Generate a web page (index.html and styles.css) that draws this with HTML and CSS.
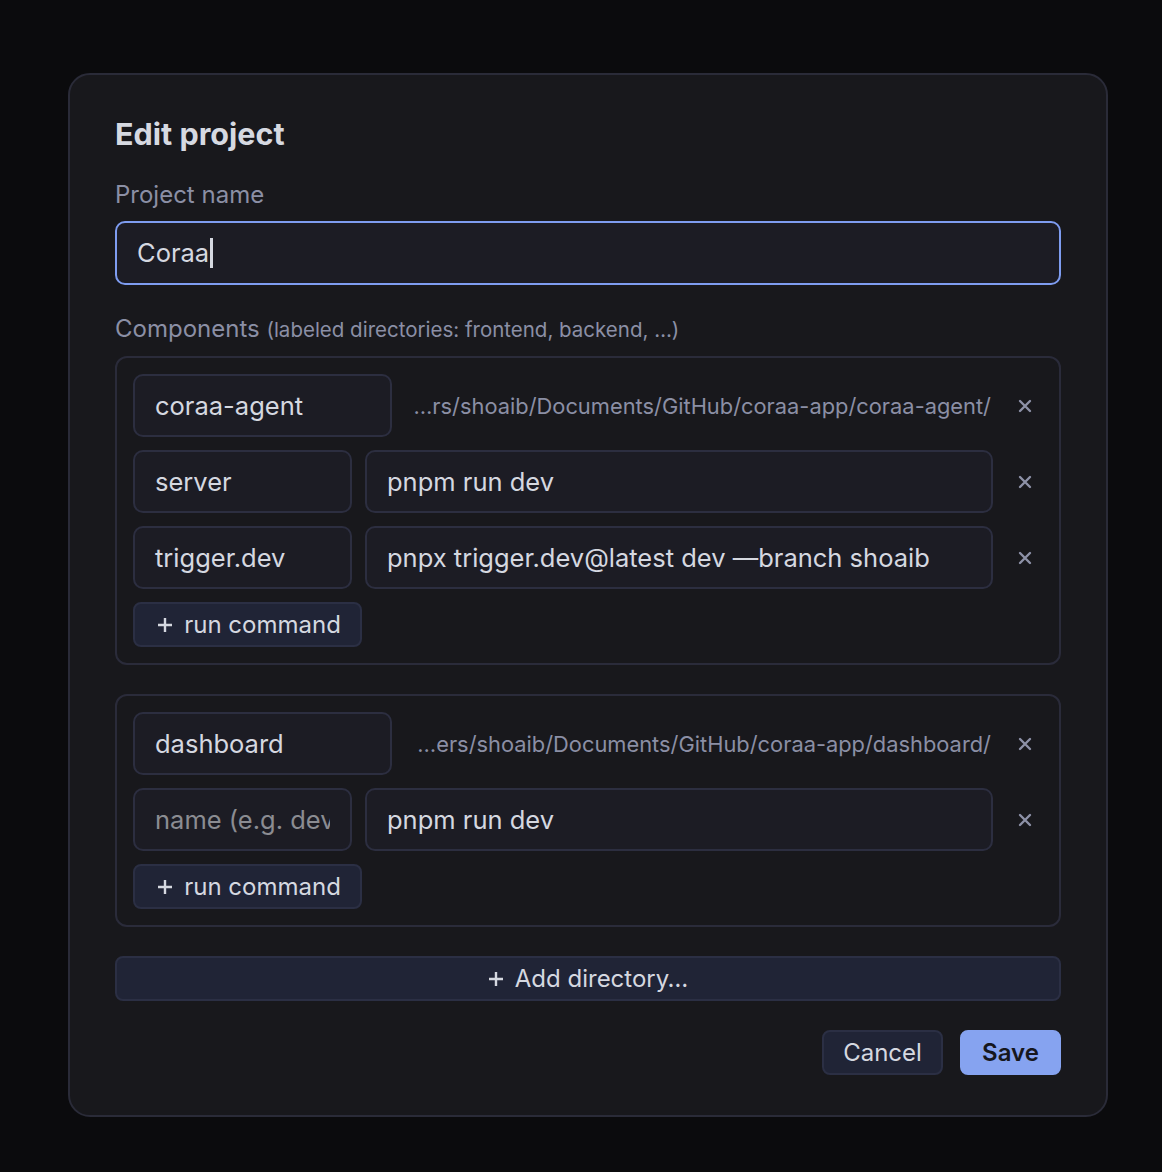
FILE: index.html
```html
<!DOCTYPE html>
<html lang="en">
<head>
    <meta charset="UTF-8">
    <title>Edit project</title>
    <link rel="stylesheet" href="styles.css">
</head>
<body>
    <div class="dialog">
        <h1 class="title">Edit project</h1>

        <label class="label">Project name</label>
        <div class="field field-focus">Coraa<span class="caret"></span></div>

        <label class="label label-comp">Components <small>(labeled directories: frontend, backend, …)</small></label>

        <div class="group">
            <div class="row">
                <div class="field name-wide">coraa-agent</div>
                <div class="path">…rs/shoaib/Documents/GitHub/coraa-app/coraa-agent/</div>
                <span class="remove">
                    <svg width="14" height="14" viewBox="0 0 14 14"><path d="M2 2L12 12M12 2L2 12"/></svg>
                </span>
            </div>
            <div class="row">
                <div class="field name">server</div>
                <div class="field cmd">pnpm run dev</div>
                <span class="remove">
                    <svg width="14" height="14" viewBox="0 0 14 14"><path d="M2 2L12 12M12 2L2 12"/></svg>
                </span>
            </div>
            <div class="row">
                <div class="field name">trigger.dev</div>
                <div class="field cmd">pnpx trigger.dev@latest dev —branch shoaib</div>
                <span class="remove">
                    <svg width="14" height="14" viewBox="0 0 14 14"><path d="M2 2L12 12M12 2L2 12"/></svg>
                </span>
            </div>
            <div class="row">
                <button class="btn btn-small">
                    <svg class="plus" width="16" height="16" viewBox="0 0 16 16"><path d="M8 1V15M1 8H15"/></svg>run command
                </button>
            </div>
        </div>

        <div class="group">
            <div class="row">
                <div class="field name-wide">dashboard</div>
                <div class="path">…ers/shoaib/Documents/GitHub/coraa-app/dashboard/</div>
                <span class="remove">
                    <svg width="14" height="14" viewBox="0 0 14 14"><path d="M2 2L12 12M12 2L2 12"/></svg>
                </span>
            </div>
            <div class="row">
                <div class="field name placeholder"><span>name (e.g. dev)</span></div>
                <div class="field cmd">pnpm run dev</div>
                <span class="remove">
                    <svg width="14" height="14" viewBox="0 0 14 14"><path d="M2 2L12 12M12 2L2 12"/></svg>
                </span>
            </div>
            <div class="row">
                <button class="btn btn-small">
                    <svg class="plus" width="16" height="16" viewBox="0 0 16 16"><path d="M8 1V15M1 8H15"/></svg>run command
                </button>
            </div>
        </div>

        <button class="btn btn-add">
            <svg class="plus" width="16" height="16" viewBox="0 0 16 16"><path d="M8 1V15M1 8H15"/></svg>Add directory…
        </button>

        <div class="footer">
            <button class="btn btn-cancel">Cancel</button>
            <button class="btn btn-save">Save</button>
        </div>
    </div>
</body>
</html>
```

FILE: styles.css
```css
* {
    margin: 0;
    padding: 0;
    box-sizing: border-box;
}
body {
    background: #0b0b0d;
    font-family: Inter, "Noto Sans", sans-serif;
    color: #d5d8e0;
    padding-top: 73px;
    padding-left: 68px;
}
.dialog {
    width: 1040px;
    height: 1044px;
    background: #18181c;
    border: 2px solid #2a2b38;
    border-radius: 22px;
    padding: 41px 45px 40px;
}
.title {
    font-size: 30.5px;
    font-weight: 700;
    line-height: 36px;
    color: #d6d9e1;
}
.label {
    display: block;
    font-size: 24px;
    line-height: 30px;
    color: #8b8fa5;
    margin-top: 28px;
    margin-bottom: 11px;
}
.label-comp {
    margin-top: 29px;
    margin-bottom: 11px;
}
.label small {
    font-size: 20.5px;
}
.field {
    height: 64px;
    background: #1c1c24;
    border: 2px solid #2c2e40;
    border-radius: 10px;
    padding: 0 20px;
    font-size: 25.5px;
    line-height: 60px;
    white-space: nowrap;
    overflow: hidden;
}
.field-focus {
    border-color: #7e9cf0;
}
.caret {
    display: inline-block;
    width: 3px;
    height: 30px;
    background: #d5d8e0;
    vertical-align: -6px;
    margin-left: 1px;
}
.group {
    border: 2px solid #2a2b3a;
    border-radius: 12px;
    padding: 16px;
    display: flex;
    flex-direction: column;
    gap: 13px;
    margin-bottom: 29px;
}
.row {
    display: flex;
    align-items: center;
    gap: 13px;
}
.row .field {
    height: 63px;
    line-height: 59px;
}
.name-wide {
    width: 259px;
    flex: none;
}
.name {
    width: 219px;
    flex: none;
}
.cmd, .path {
    flex: 1;
    min-width: 0;
}
.path {
    padding: 0 2px 0 8px;
    font-size: 21.85px;
    color: #8b8fa5;
    white-space: nowrap;
    overflow: hidden;
    text-align: right;
}
.placeholder span {
    display: block;
    overflow: hidden;
    color: #8b8c92;
}
.remove {
    width: 37px;
    flex: none;
    display: flex;
    justify-content: center;
}
.remove svg {
    stroke: #8d91a7;
    stroke-width: 2.4;
    stroke-linecap: round;
}
.btn {
    font-family: inherit;
    height: 45px;
    border: 2px solid #2b2f44;
    background: #202436;
    color: #d5d8e0;
    border-radius: 8px;
    font-size: 24px;
    cursor: pointer;
    display: flex;
    align-items: center;
    justify-content: center;
}
.plus {
    stroke: #d5d8e0;
    stroke-width: 2.4;
    margin-right: 11px;
}
.btn-small {
    width: 229px;
    padding-left: 3px;
}
.btn-add {
    width: 100%;
    margin-bottom: 29px;
}
.footer {
    display: flex;
    justify-content: flex-end;
    gap: 17px;
}
.btn-cancel {
    width: 121px;
}
.btn-save {
    width: 101px;
    background: #86a3f0;
    border-color: #86a3f0;
    color: #16171d;
    font-weight: 600;
}
```
